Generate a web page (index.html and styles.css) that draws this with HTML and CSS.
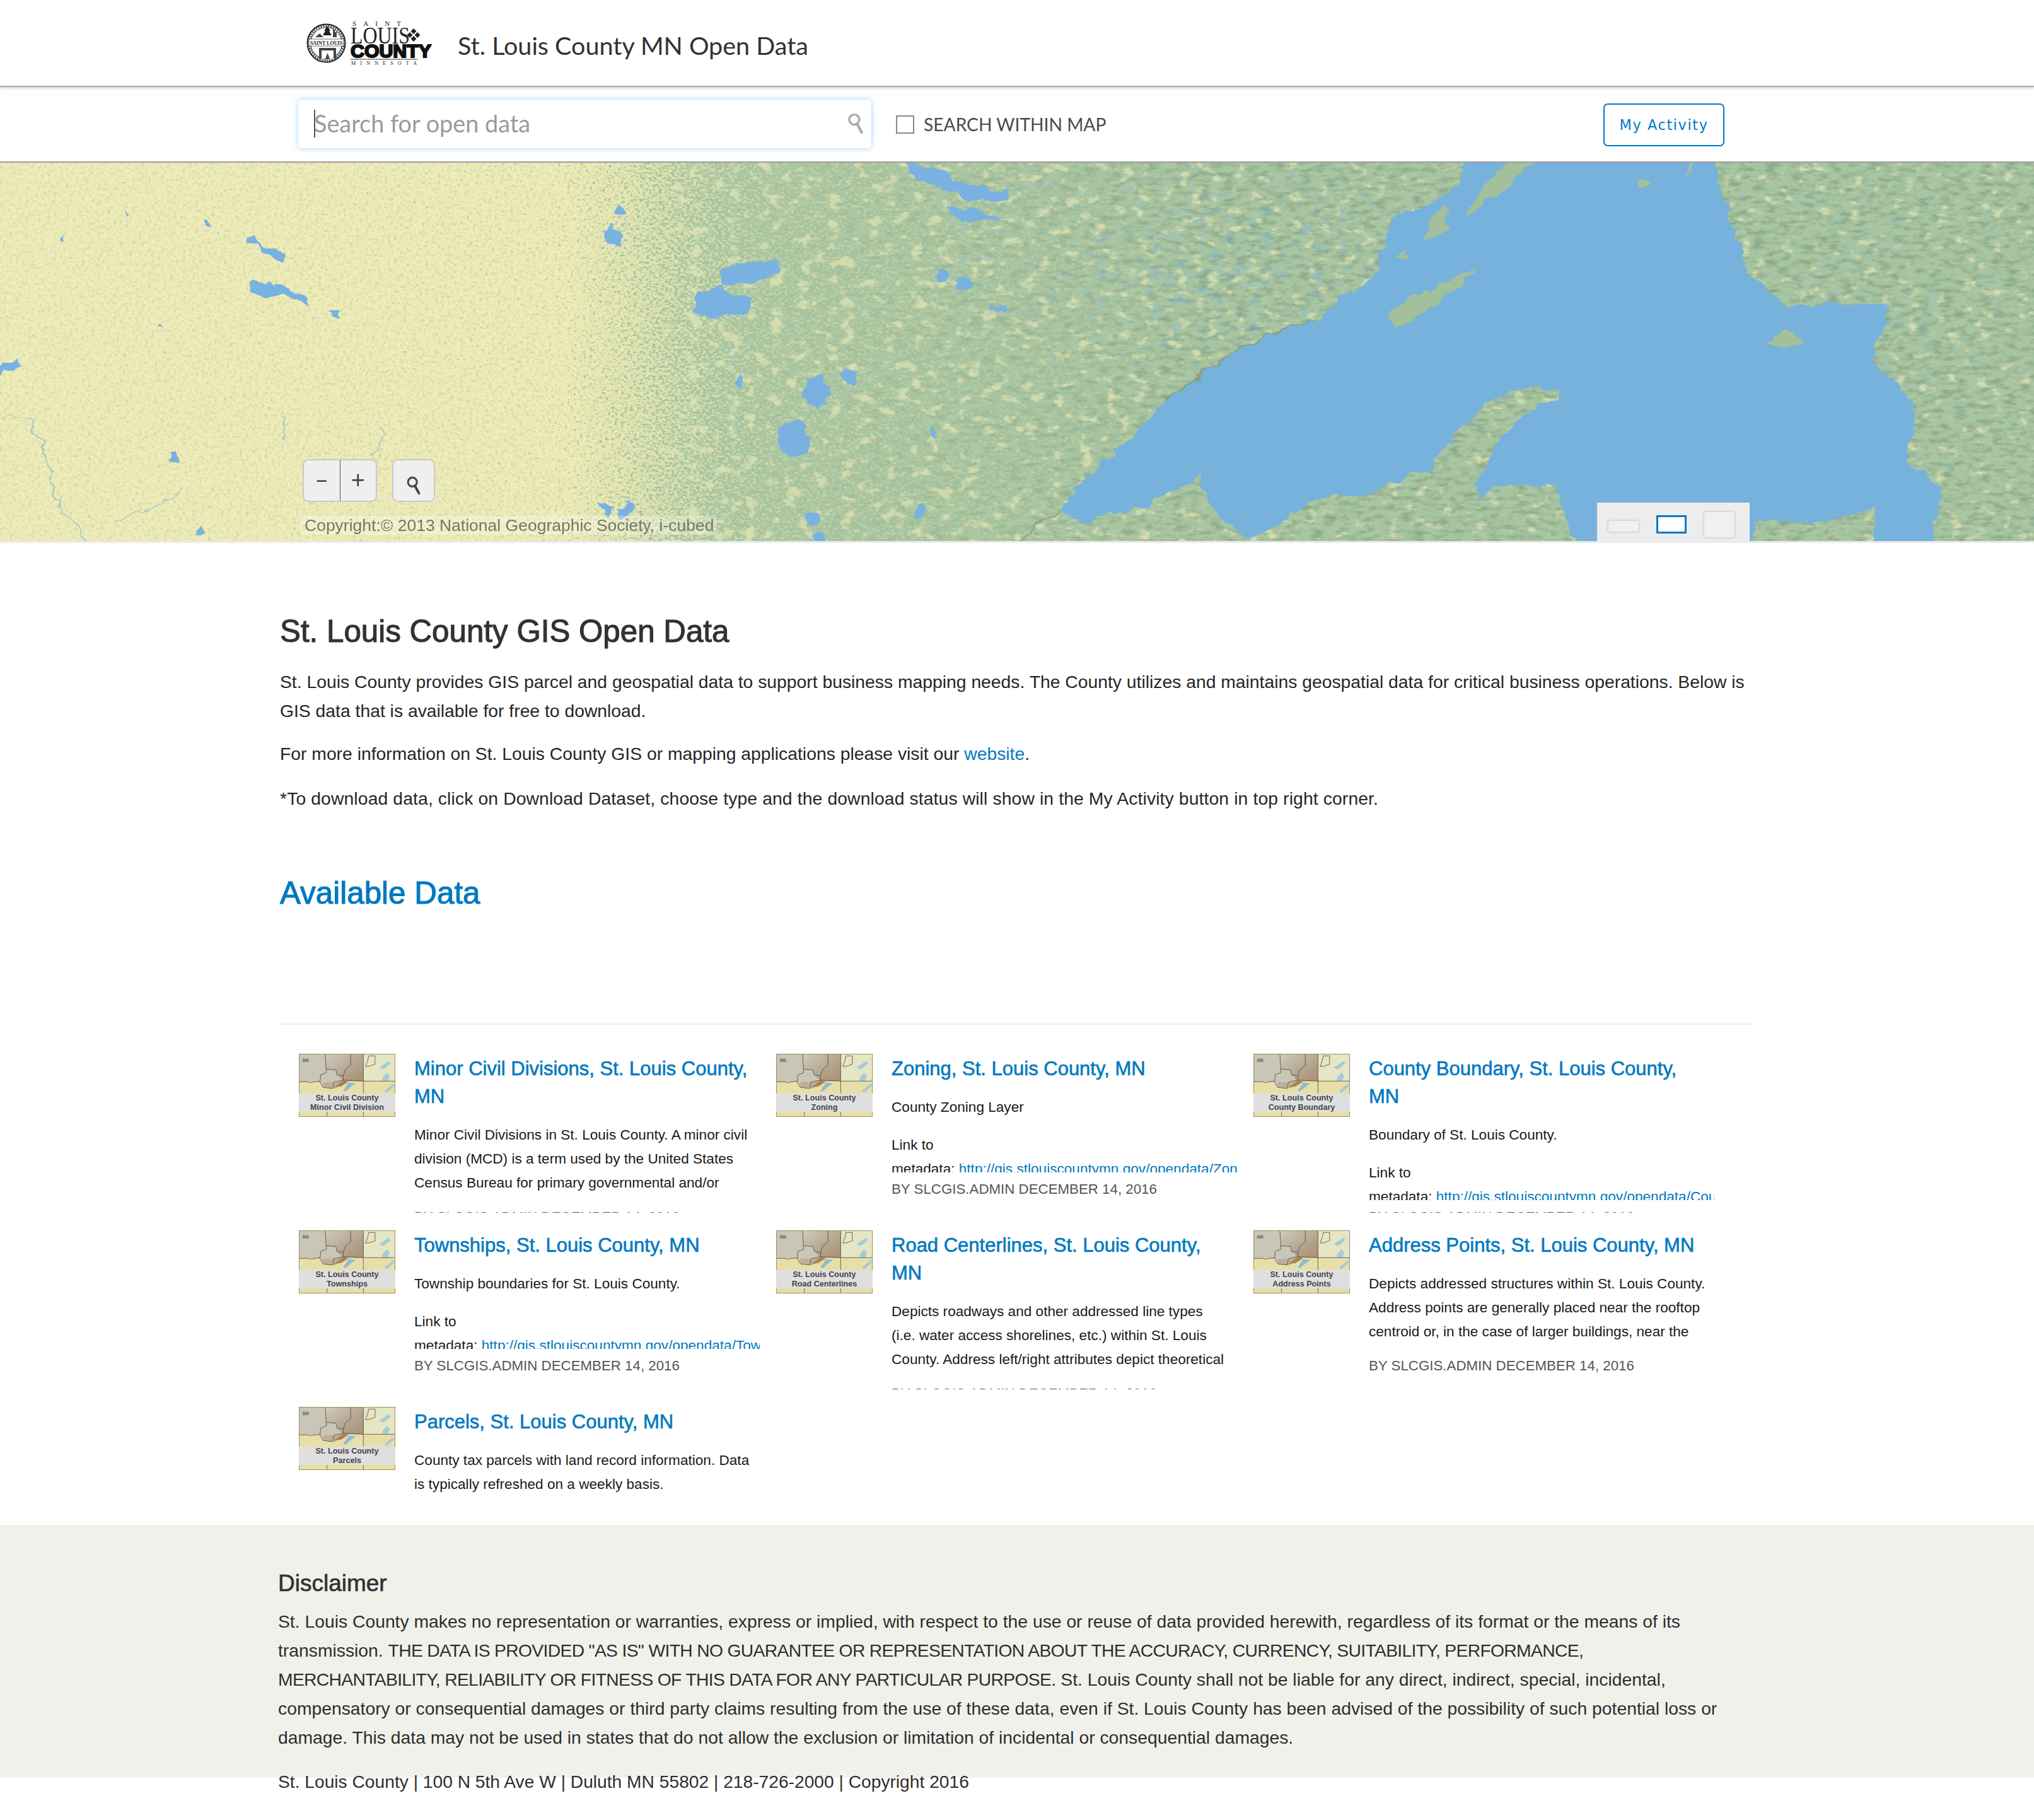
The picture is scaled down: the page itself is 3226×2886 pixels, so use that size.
FILE: index.html
```html
<!DOCTYPE html>
<html lang="en">
<head>
<meta charset="utf-8">
<title>St. Louis County MN Open Data</title>
<link rel="stylesheet" href="styles.css">
</head>
<body>
<svg class="defs" width="0" height="0" aria-hidden="true">
  <defs>
    <linearGradient id="thumbbrown" x1="0" x2="1" y1="0" y2="1">
      <stop offset="0" stop-color="#cfcbbb"/>
      <stop offset=".6" stop-color="#b3a48f"/>
      <stop offset="1" stop-color="#a98f70"/>
    </linearGradient>
  </defs>
  <symbol id="thumbmap" viewBox="0 0 152 100" preserveAspectRatio="none">
    <g transform="translate(-5 -5) scale(.3333)">
      <rect x="15" y="15" width="456" height="300" fill="#e8dfa8"/>
      <path d="M320 15H470V145H320Z" fill="#e6e5c4"/>
      <path d="M15 15H320V145H225L180 150 175 180 130 175 115 148H15Z" fill="#c9c6b8"/>
      <path d="M145 15H320V145H225L195 115 190 92 145 88Z" fill="url(#thumbbrown)"/>
      <path d="M130 150H175L180 150 225 140 215 165 185 180 130 175Z" fill="#bcb09a"/>
      <path d="M180 175L225 142 250 148 215 170Z" fill="#a8844f"/>
      <path d="M225 190L250 152 285 155 262 172 235 195Z" fill="#8ebcd5"/>
      <path d="M410 130L430 105 445 120 435 145 410 145ZM395 80L440 50 450 60 415 90ZM420 190L465 155V170L430 200Z" fill="#a3cbdb"/>
      <rect x="32" y="38" width="30" height="16" fill="#8d8b82"/>
      <g fill="none" stroke="#4f4a3c" stroke-width="2.4">
        <path d="M140 15L145 105 118 115 115 150 130 175 175 180 180 150 225 140 320 145H470"/>
        <path d="M260 15V70L235 90 225 120 195 115 190 92 145 88"/>
        <path d="M225 120V140"/>
        <path d="M15 148H60L65 153 80 150 115 145"/>
        <path d="M320 15V205"/>
        <path d="M345 25H375V65L345 75H330L340 50Z"/>
        <path d="M148 290V315M320 290V315"/>
      </g>
      <rect x="16" y="16" width="454" height="298" fill="none" stroke="#94814b" stroke-width="3"/>
    </g>
  </symbol>
  <symbol id="glass" viewBox="0 0 24 32">
    <circle cx="10" cy="10" r="7.5" fill="none" stroke="currentColor" stroke-width="3.2"/>
    <path d="M14 16L21 29" stroke="currentColor" stroke-width="4.2" stroke-linecap="round"/>
  </symbol>
</svg>

<header class="topbar">
  <svg class="logo" viewBox="0 0 204 74" role="img" aria-label="Saint Louis County Minnesota">
    <circle cx="31.5" cy="37.5" r="30" fill="#fff" stroke="#222" stroke-width="2"/>
    <circle cx="31.5" cy="37.5" r="25" fill="none" stroke="#333" stroke-width="1.2"/>
    <circle cx="31.5" cy="37.5" r="27.5" fill="none" stroke="#555" stroke-width="3" stroke-dasharray="2.4 1.6"/>
    <path d="M33 10l5 8h-2l4 7h-14l4-7h-2z" fill="#222"/>
    <path d="M14 28l7-6 6 6zM42 28v-12h3v4h3v8z" fill="#444"/>
    <rect x="4" y="31" width="55" height="11" fill="#fff" stroke="#333" stroke-width=".7"/>
    <text x="31.5" y="39.5" class="logo-seal">SAINT LOUIS</text>
    <path d="M20 45H47V62H20Z" fill="#444"/>
    <path d="M24 49H43V62H24Z" fill="#fff"/>
    <path d="M30 62l3.500-9 3.500 9z" fill="#444"/>
    <text x="73" y="10" class="logo-small" textLength="77">SAINT</text>
    <text x="70" y="38" class="logo-louis" textLength="94" lengthAdjust="spacingAndGlyphs">LOUIS</text>
    <path d="M170 14l4.500 4.500-4.500 4.500-4.500-4.500zM164 20l4.500 4.500-4.500 4.500-4.500-4.500zM176 20l4.500 4.500-4.500 4.500-4.500-4.500zM170 26l4.500 4.500-4.500 4.500-4.500-4.500z" fill="#222"/>
    <text x="70" y="60" class="logo-county" textLength="128" lengthAdjust="spacingAndGlyphs">COUNTY</text>
    <path d="M70 63H176" stroke="#222" stroke-width="1.500" stroke-dasharray="1.500 1"/>
    <text x="71" y="72" class="logo-tiny" textLength="104">MINNESOTA</text>
  </svg>
  <h1 class="site-title">St. Louis County MN Open Data</h1>
</header>

<div class="searchbar">
  <div class="search-box">
    <span class="caret"></span>
    <input class="search-input" type="text" placeholder="Search for open data" aria-label="Search for open data">
    <svg class="search-icon"><use href="#glass"/></svg>
  </div>
  <label class="within"><span class="check"></span>SEARCH WITHIN MAP</label>
  <a class="activity" href="#">My Activity</a>
</div>

<section class="map">
  <svg class="map-art" viewBox="0 0 3226 602" preserveAspectRatio="none" aria-hidden="true">
    <defs>
      <linearGradient id="underlay" x1="0" x2="1" y1="0" y2="0">
        <stop offset=".28" stop-color="#eeecb9"/>
        <stop offset=".33" stop-color="#dde3b0"/>
        <stop offset=".38" stop-color="#c6d5a8"/>
        <stop offset=".6" stop-color="#b3cba4"/>
        <stop offset="1" stop-color="#b0caa4"/>
      </linearGradient>
      <linearGradient id="landmix" x1="0" x2="1" y1="0" y2="0">
        <stop offset="0" stop-color="#000" stop-opacity=".12"/>
        <stop offset=".27" stop-color="#000" stop-opacity=".18"/>
        <stop offset=".31" stop-color="#000" stop-opacity=".42"/>
        <stop offset=".335" stop-color="#000" stop-opacity=".62"/>
        <stop offset=".36" stop-color="#000" stop-opacity=".76"/>
        <stop offset=".45" stop-color="#000" stop-opacity=".82"/>
        <stop offset=".6" stop-color="#000" stop-opacity=".92"/>
        <stop offset="1" stop-color="#000" stop-opacity=".96"/>
      </linearGradient>
      <linearGradient id="yellowmix" x1="0" x2="1" y1="0" y2="0">
        <stop offset=".3" stop-color="#000" stop-opacity="0"/>
        <stop offset=".34" stop-color="#000" stop-opacity=".38"/>
        <stop offset=".5" stop-color="#000" stop-opacity=".36"/>
        <stop offset=".7" stop-color="#000" stop-opacity=".28"/>
        <stop offset="1" stop-color="#000" stop-opacity=".28"/>
      </linearGradient>
      <linearGradient id="reliefgrad" x1="0" x2="1" y1="0" y2="0">
        <stop offset="0" stop-color="#000"/>
        <stop offset=".4" stop-color="#fff"/>
      </linearGradient>
      <mask id="reliefmask"><rect x="1100" width="2126" height="602" fill="url(#reliefgrad)"/></mask>
      <radialGradient id="pondmix" cx=".5" cy=".4" r=".6">
        <stop offset="0" stop-color="#000" stop-opacity=".5"/>
        <stop offset="1" stop-color="#000" stop-opacity=".1"/>
      </radialGradient>
      <filter id="speckle" x="0" y="0" width="100%" height="100%" color-interpolation-filters="sRGB">
        <feTurbulence type="fractalNoise" baseFrequency=".2 .26" numOctaves="4" seed="7" result="n"/>
        <feColorMatrix in="n" type="matrix" values="0 0 0 0 0 0 0 0 0 0 0 0 0 0 0 1.9 0 0 0 -.45" result="na"/>
        <feComposite in="SourceGraphic" in2="na" operator="arithmetic" k1="0" k2="1" k3="1" k4="-1" result="sum"/>
        <feComponentTransfer in="sum" result="thr"><feFuncA type="linear" slope="4" intercept="0"/></feComponentTransfer>
        <feFlood flood-color="#a8c5a2"/>
        <feComposite in2="thr" operator="in" result="g"/>
        <feGaussianBlur in="g" stdDeviation=".7"/>
      </filter>
      <filter id="mottle" x="0" y="0" width="100%" height="100%" color-interpolation-filters="sRGB">
        <feTurbulence type="fractalNoise" baseFrequency=".045 .06" numOctaves="6" seed="31" result="n"/>
        <feColorMatrix in="n" type="matrix" values="0 0 0 0 0 0 0 0 0 0 0 0 0 0 0 1.9 0 0 0 -.45" result="na"/>
        <feComposite in="SourceGraphic" in2="na" operator="arithmetic" k1="0" k2="1" k3="1" k4="-1" result="sum"/>
        <feComponentTransfer in="sum" result="thr"><feFuncA type="linear" slope="4" intercept="0"/></feComponentTransfer>
        <feFlood flood-color="#e2e5b4"/>
        <feComposite in2="thr" operator="in" result="g"/>
        <feGaussianBlur in="g" stdDeviation=".8"/>
      </filter>
      <filter id="pond" x="0" y="0" width="100%" height="100%" color-interpolation-filters="sRGB">
        <feTurbulence type="fractalNoise" baseFrequency=".05 .07" numOctaves="4" seed="21" result="n"/>
        <feColorMatrix in="n" type="matrix" values="0 0 0 0 0 0 0 0 0 0 0 0 0 0 0 2 0 0 0 -.5" result="na"/>
        <feComposite in="SourceGraphic" in2="na" operator="arithmetic" k1="0" k2="1" k3="1" k4="-1" result="sum"/>
        <feComponentTransfer in="sum" result="thr"><feFuncA type="linear" slope="3" intercept="0"/></feComponentTransfer>
        <feFlood flood-color="#8fbdcf"/>
        <feComposite in2="thr" operator="in"/>
      </filter>
      <filter id="relief" x="0" y="0" width="100%" height="100%" color-interpolation-filters="sRGB">
        <feTurbulence type="fractalNoise" baseFrequency=".05 .13" numOctaves="4" seed="12"/>
        <feColorMatrix type="matrix" values="0 0 0 0 .38 0 0 0 0 .5 0 0 0 0 .4 2.6 0 0 0 -1.15"/>
      </filter>
      <filter id="grain" x="0" y="0" width="100%" height="100%" color-interpolation-filters="sRGB">
        <feTurbulence type="fractalNoise" baseFrequency=".2" numOctaves="3" seed="3"/>
        <feColorMatrix type="matrix" values="0 0 0 0 .75 0 0 0 0 .74 0 0 0 0 .55 2 0 0 0 -.95"/>
      </filter>
      <filter id="coast" filterUnits="userSpaceOnUse" x="-60" y="-60" width="3346" height="722" color-interpolation-filters="sRGB">
        <feTurbulence type="fractalNoise" baseFrequency=".035 .05" numOctaves="3" seed="5" result="d"/>
        <feDisplacementMap in="SourceGraphic" in2="d" scale="20" xChannelSelector="R" yChannelSelector="G"/>
      </filter>
    </defs>
    <rect width="3226" height="602" fill="url(#underlay)"/>
    <rect width="3226" height="602" filter="url(#grain)" opacity=".55"/>
    <rect width="3226" height="602" fill="url(#landmix)" filter="url(#speckle)"/>
    <rect width="3226" height="602" fill="url(#yellowmix)" filter="url(#mottle)" opacity=".75"/>
    <rect x="1500" width="850" height="420" fill="url(#pondmix)" filter="url(#pond)" opacity=".55"/>
    <rect x="2650" width="576" height="602" fill="url(#pondmix)" filter="url(#pond)" opacity=".25"/>
    <g mask="url(#reliefmask)"><rect x="1100" width="2126" height="602" filter="url(#relief)" opacity=".42"/></g>

    <g filter="url(#coast)">
      <g transform="translate(0 -6) scale(1.02 .4005)" fill="#79b2e1">
        <path d="M1120 460L1150 410 1210 400 1212 450 1170 495 1125 490ZM1080 622L1085 540 1125 490 1130 530 1170 550 1165 610 1130 626Z"/>
        <ellipse cx="1270" cy="925" rx="21" ry="60"/>
        <ellipse cx="1235" cy="1115" rx="25" ry="75"/>
        <ellipse cx="952" cy="305" rx="13" ry="42"/>
        <ellipse cx="967" cy="207" rx="9" ry="18"/>
        <ellipse cx="1498" cy="500" rx="12" ry="25"/>
        <ellipse cx="1463" cy="460" rx="8" ry="22"/>
        <ellipse cx="1320" cy="860" rx="9" ry="25"/>
        <ellipse cx="1152" cy="885" rx="6" ry="25"/>
        <ellipse cx="1430" cy="1400" rx="9" ry="30"/>
        <ellipse cx="1265" cy="1430" rx="14" ry="30"/>
        <ellipse cx="1272" cy="1505" rx="10" ry="28"/>
        <path d="M1410 20L1450 22 1490 90 1568 130V170L1510 170 1470 120 1425 90ZM1470 190L1500 190 1560 240H1490ZM0 825L25 790 34 830 0 862Z"/>
        <path d="M385 530L395 480 410 500 440 495 455 530 475 550 485 590 465 570 445 530 410 545ZM510 590L525 600 530 640 512 620ZM380 320L395 300 415 350 445 380 440 410 415 380 405 340 385 345ZM322 240L328 275 320 275ZM195 205L202 225 195 232ZM95 285L100 325 93 325ZM248 650L254 670 245 670ZM305 1490l8 -30 8 30-6 15zM262 1160l10 0 6 50-10 0z"/>
        <path d="M932 1360l20 30-6 40-12-30zM962 1400l16 -50 6 40-14 40zM1450 1060l8 30-6 30-6-30zM1540 580l20 10 6 30-16-10z"/>
      </g>
      <g transform="translate(0 -6) scale(1.02 .4005)" fill="none" stroke="#a5c8c8" stroke-width="2.500">
        <path d="M0 1030L45 1025 70 1170 90 1380 140 1530M590 1060L600 1090 580 1180M180 1440L220 1400 265 1350 285 1310M440 1020V1110M1130 740L1150 830M1370 1060L1390 1130"/>
      </g>
      <g transform="translate(1600 -6) scale(1.037 .4005)">
        <path fill="#76b2db" d="M700 -120L690 100 650 170 590 220 578 300 560 460 480 620 380 720 300 840 240 960 200 1080 130 1230 75 1400 110 1440 200 1390 290 1260 310 1400 370 1515 470 1350 560 1320 640 1230 680 1100 740 950 800 905 842 925 835 960 790 1010 760 1090 720 1230 715 1340 770 1280 830 1300 895 1680H1140V1440L1250 1440 1325 1390 1320 1680H1400L1420 1390 1430 1300 1370 1200 1390 1030 1380 950 1320 800 1345 590 1260 575 1190 590 1130 450 1090 130 1070 -120Z"/>
        <g fill="#a3c09c">
          <path d="M590 672L580 610 640 520 712 430 690 510 640 600 610 650Z"/>
          <path d="M632 335L660 170 675 200 668 280 650 320Z"/>
          <path d="M695 240L720 130 745 60 800 -60 840 -60 760 110 730 170 705 220Z"/>
          <path d="M1158 735L1190 685 1216 720 1192 748Z"/>
          <path d="M958 80L970 72 978 100 965 115Z"/>
          <path d="M592 380L606 360 612 395 600 402Z"/>
          <path d="M1035 70L1048 -40 1060 -40 1040 60Z"/>
        </g>
        <path d="M0 1540L75 1400M240 960L300 840 380 720 470 630" fill="none" stroke="#8d9f7c" stroke-width="4"/>
      </g>
    </g>
  </svg>
  <div class="map-tools">
    <div class="zoom-pair">
      <button class="zoom-btn" type="button">–</button>
      <button class="zoom-btn" type="button">+</button>
    </div>
    <button class="glass-btn" type="button" aria-label="Zoom to"><svg class="glass-icon"><use href="#glass"/></svg></button>
  </div>
  <div class="copyright">Copyright:© 2013 National Geographic Society, i-cubed</div>
  <div class="shapes">
    <span class="shape shape-wide"></span>
    <span class="shape shape-mid"></span>
    <span class="shape shape-tall"></span>
  </div>
</section>
<div class="map-edge"></div>

<main class="content">
  <h2 class="page-title">St. Louis County GIS Open Data</h2>
  <p class="lead">St. Louis County provides GIS parcel and geospatial data to support business mapping needs. The County utilizes and maintains geospatial data for critical business operations. Below is GIS data that is available for free to download.</p>
  <p class="lead">For more information on St. Louis County GIS or mapping applications please visit our <a href="#">website</a>.</p>
  <p class="lead lead-last">*To download data, click on Download Dataset, choose type and the download status will show in the My Activity button in top right corner.</p>
  <h2 class="avail">Available Data</h2>
  <hr class="rule">

  <div class="cards">
    <article class="card">
      <div class="thumb"><svg class="thumb-map"><use href="#thumbmap"/></svg><div class="thumb-cap">St. Louis County<br>Minor Civil Division</div></div>
      <div class="card-body">
        <h3 class="card-title">Minor Civil Divisions, St. Louis County, MN</h3>
        <div class="desc"><p>Minor Civil Divisions in St. Louis County. A minor civil division (MCD) is a term used by the United States Census Bureau for primary governmental and/or administrative units.</p></div>
        <div class="byline">BY SLCGIS.ADMIN DECEMBER 14, 2016</div>
      </div>
    </article>
    <article class="card">
      <div class="thumb"><svg class="thumb-map"><use href="#thumbmap"/></svg><div class="thumb-cap">St. Louis County<br>Zoning</div></div>
      <div class="card-body">
        <h3 class="card-title">Zoning, St. Louis County, MN</h3>
        <div class="desc"><p>County Zoning Layer</p><p>Link to<br><span class="nowrap">metadata: <a href="#">http://gis.stlouiscountymn.gov/opendata/Zoning.pdf</a></span></p></div>
        <div class="byline">BY SLCGIS.ADMIN DECEMBER 14, 2016</div>
      </div>
    </article>
    <article class="card">
      <div class="thumb"><svg class="thumb-map"><use href="#thumbmap"/></svg><div class="thumb-cap">St. Louis County<br>County Boundary</div></div>
      <div class="card-body">
        <h3 class="card-title">County Boundary, St. Louis County, MN</h3>
        <div class="desc"><p>Boundary of St. Louis County.</p><p>Link to<br><span class="nowrap">metadata: <a href="#">http://gis.stlouiscountymn.gov/opendata/County.pdf</a></span></p></div>
        <div class="byline">BY SLCGIS.ADMIN DECEMBER 14, 2016</div>
      </div>
    </article>
    <article class="card">
      <div class="thumb"><svg class="thumb-map"><use href="#thumbmap"/></svg><div class="thumb-cap">St. Louis County<br>Townships</div></div>
      <div class="card-body">
        <h3 class="card-title">Townships, St. Louis County, MN</h3>
        <div class="desc"><p>Township boundaries for St. Louis County.</p><p>Link to<br><span class="nowrap">metadata: <a href="#">http://gis.stlouiscountymn.gov/opendata/Townships.pdf</a></span></p></div>
        <div class="byline">BY SLCGIS.ADMIN DECEMBER 14, 2016</div>
      </div>
    </article>
    <article class="card">
      <div class="thumb"><svg class="thumb-map"><use href="#thumbmap"/></svg><div class="thumb-cap">St. Louis County<br>Road Centerlines</div></div>
      <div class="card-body">
        <h3 class="card-title">Road Centerlines, St. Louis County, MN</h3>
        <div class="desc"><p>Depicts roadways and other addressed line types<br>(i.e. water access shorelines, etc.) within St. Louis<br>County. Address left/right attributes depict theoretical address ranges.</p></div>
        <div class="byline">BY SLCGIS.ADMIN DECEMBER 14, 2016</div>
      </div>
    </article>
    <article class="card">
      <div class="thumb"><svg class="thumb-map"><use href="#thumbmap"/></svg><div class="thumb-cap">St. Louis County<br>Address Points</div></div>
      <div class="card-body">
        <h3 class="card-title">Address Points, St. Louis County, MN</h3>
        <div class="desc"><p>Depicts addressed structures within St. Louis County. Address points are generally placed near the rooftop centroid or, in the case of larger buildings, near the main entrance.</p></div>
        <div class="byline">BY SLCGIS.ADMIN DECEMBER 14, 2016</div>
      </div>
    </article>
    <article class="card card-last">
      <div class="thumb"><svg class="thumb-map"><use href="#thumbmap"/></svg><div class="thumb-cap">St. Louis County<br>Parcels</div></div>
      <div class="card-body">
        <h3 class="card-title">Parcels, St. Louis County, MN</h3>
        <div class="desc"><p>County tax parcels with land record information. Data is typically refreshed on a weekly basis.</p></div>
      </div>
    </article>
  </div>
</main>

<footer class="foot">
  <div class="foot-band">
    <h2 class="foot-title">Disclaimer</h2>
    <p class="foot-text">St. Louis County makes no representation or warranties, express or implied, with respect to the use or reuse of data provided herewith, regardless of its format or the means of its transmission. <span class="foot-caps">THE DATA IS PROVIDED "AS IS" WITH NO GUARANTEE OR REPRESENTATION ABOUT THE ACCURACY, CURRENCY, SUITABILITY, PERFORMANCE, MERCHANTABILITY, RELIABILITY OR FITNESS OF THIS DATA FOR ANY PARTICULAR PURPOSE.</span> St. Louis County shall not be liable for any direct, indirect, special, incidental, compensatory or consequential damages or third party claims resulting from the use of these data, even if St. Louis County has been advised of the possibility of such potential loss or damage. This data may not be used in states that do not allow the exclusion or limitation of incidental or consequential damages.</p>
  </div>
  <p class="foot-line">St. Louis County | 100 N 5th Ave W | Duluth MN 55802 | 218-726-2000 | Copyright 2016</p>
</footer>
</body>
</html>
```

FILE: styles.css
```css
* { box-sizing: border-box; }
html, body { margin: 0; padding: 0; background: #fff; }
body { font-family: "Liberation Sans", Arial, sans-serif; color: #333; width: 3226px; height: 2886px; overflow: hidden; }
a { color: #0079c1; text-decoration: none; }
.defs { position: absolute; }

.topbar { height: 138px; display: flex; align-items: center; padding-left: 486px; gap: 36px; border-bottom: 2px solid #a9a9a9; box-shadow: 0 2px 4px rgba(0,0,0,.18); position: relative; }
.logo { width: 204px; height: 74px; flex: none; }
.logo-seal { font: 700 8px "Liberation Serif", serif; text-anchor: middle; fill: #222; }
.logo-small { font: 400 11px "Liberation Serif", serif; fill: #222; }
.logo-tiny { font: 400 8px "Liberation Serif", serif; fill: #222; }
.logo-louis { font: 400 37px/1 "Liberation Serif", serif; fill: #222; }
.logo-county { font: 700 30px/1 "Liberation Sans", sans-serif; fill: #111; stroke: #111; stroke-width: 2.2px; }
.site-title { margin: 8px 0 0; font: 400 39.5px/1 Lato, sans-serif; color: #323232; }

.searchbar { height: 118px; display: flex; align-items: center; padding-left: 473px; position: relative; }
.search-box { width: 909px; height: 77px; margin-top: -2px; border-radius: 6px; background: #fff; box-shadow: 0 0 9px rgba(80,160,230,.5); display: flex; align-items: center; padding: 0 12px 0 25px; position: relative; }
.caret { position: absolute; left: 25px; top: 16px; width: 2px; height: 44px; background: #555; }
.search-input { flex: 1; border: 0; outline: 0; padding: 0; background: transparent; font: 400 37.8px/1.2 Lato, sans-serif; color: #333; }
.search-input::placeholder { color: #9b9b9b; opacity: 1; }
.search-icon { width: 26px; height: 34px; color: #ababab; flex: none; }
.within { margin-left: 39px; display: flex; align-items: center; gap: 15px; font: 400 28.2px/1 Lato, sans-serif; color: #4a4a4a; }
.check { width: 29px; height: 29px; border: 2px solid #8a8a8a; background: #fff; }
.activity { margin: 2px 491px 0 auto; width: 192px; height: 68px; border: 2px solid #0079c1; border-radius: 7px; display: flex; align-items: center; justify-content: center; font: 400 22.4px/1 "DejaVu Sans", sans-serif; letter-spacing: 1.6px; color: #0079c1; }

.map { height: 602px; position: relative; overflow: hidden; border-top: 2px solid #9c9c9c; }
.map-art { position: absolute; inset: 0; width: 100%; height: 100%; display: block; }
.map-edge { height: 3px; background: #ececec; }
.map-tools { position: absolute; left: 480px; top: 470px; display: flex; gap: 24px; }
.zoom-pair { display: flex; width: 118px; height: 68px; border: 2px solid #c9c9c9; border-radius: 9px; background: #efefef; overflow: hidden; }
.zoom-btn { flex: 1; border: 0; padding: 0 0 6px; background: transparent; font: 400 38px/1 Lato, sans-serif; color: #444; }
.zoom-btn + .zoom-btn { border-left: 1.5px solid #555; }
.glass-btn { width: 68px; height: 68px; border: 2px solid #c9c9c9; border-radius: 9px; background: #efefef; padding: 16px 0 0; }
.glass-icon { width: 26px; height: 30px; color: #444; display: block; margin: 0 auto; }
.copyright { position: absolute; left: 477px; top: 560px; width: 660px; height: 30px; padding-left: 6px; background: rgba(255,255,255,.3); font: 400 26.5px/30px "Liberation Sans", sans-serif; color: #77775f; white-space: nowrap; }
.shapes { position: absolute; left: 2533px; bottom: 0; width: 242px; height: 61px; background: #ededed; display: flex; align-items: center; gap: 28px; padding: 6px 0 0 18px; }
.shape { display: block; width: 48px; background: #f0f0f0; border-radius: 3px; box-shadow: 0 0 3px 1px #c6c6c6; }
.shape-wide { height: 17px; margin-top: 8px; }
.shape-mid { height: 29px; background: #fff; border: 3px solid #0079c1; border-radius: 0; box-shadow: none; margin-top: 2px; }
.shape-tall { height: 40px; margin-top: 2px; }

.content { padding: 0 448px 0 444px; height: 1557px; overflow: hidden; position: relative; }
.page-title { margin: 0; padding-top: 110px; font: 400 49.3px/60px "Liberation Sans", sans-serif; color: #323232; -webkit-text-stroke: 1.1px #323232; }
.lead { margin: 27px 0 0; font: 400 28.3px/46px "Liberation Sans", sans-serif; color: #262626; }
.lead + .lead { margin-top: 22px; }
.lead + .lead-last { margin-top: 25px; letter-spacing: .12px; }
.avail { margin: 96px 0 0; font: 400 49.4px/62px "Liberation Sans", sans-serif; color: #0079c1; -webkit-text-stroke: 1.1px #0079c1; }
.rule { margin: 176px 0 0; border: 0; border-top: 2px solid #ededed; }

.cards { display: grid; grid-template-columns: repeat(3, 757px); grid-auto-rows: 280px; margin: 46px 0 0 30px; }
.card { display: flex; gap: 30px; height: 252px; overflow: hidden; }
.card-last { overflow: visible; }
.thumb { width: 153px; height: 100px; flex: none; position: relative; }
.thumb-map { width: 100%; height: 100%; display: block; }
.thumb-cap { position: absolute; left: 0; right: 0; top: 63px; height: 29px; background: #dfdfe0; text-align: center; font: 700 12.6px/14.5px "Liberation Sans", sans-serif; color: #444; white-space: nowrap; }
.card-body { width: 548px; flex: none; overflow: hidden; padding-top: 2px; }
.card-title { margin: 0; max-width: 535px; font: 400 31px/44px "Liberation Sans", sans-serif; color: #0079c1; -webkit-text-stroke: .6px #0079c1; }
.desc { margin-top: 20px; height: 122px; overflow: hidden; font: 400 22.6px/38px "Liberation Sans", sans-serif; color: #1a1a1a; }
.desc p { margin: 0 0 22px; }
.nowrap { white-space: nowrap; }
.byline { margin-top: 8px; font: 400 22.3px/38px "Liberation Sans", sans-serif; color: #555; white-space: nowrap; }

.foot { position: relative; }
.foot-band { height: 401px; background: #f1f1ec; padding: 68px 0 0 441px; }
.foot-title { margin: 0; font: 400 37px/50px "Liberation Sans", sans-serif; color: #323232; -webkit-text-stroke: .7px #323232; }
.foot-text { margin: 12px 0 0; width: 2292px; font: 400 28.3px/46px "Liberation Sans", sans-serif; color: #2e2e2e; }
.foot-caps { letter-spacing: -.68px; }
.foot-line { margin: -17px 0 0 441px; font: 400 28.2px/46px "Liberation Sans", sans-serif; color: #2e2e2e; position: relative; }
```
